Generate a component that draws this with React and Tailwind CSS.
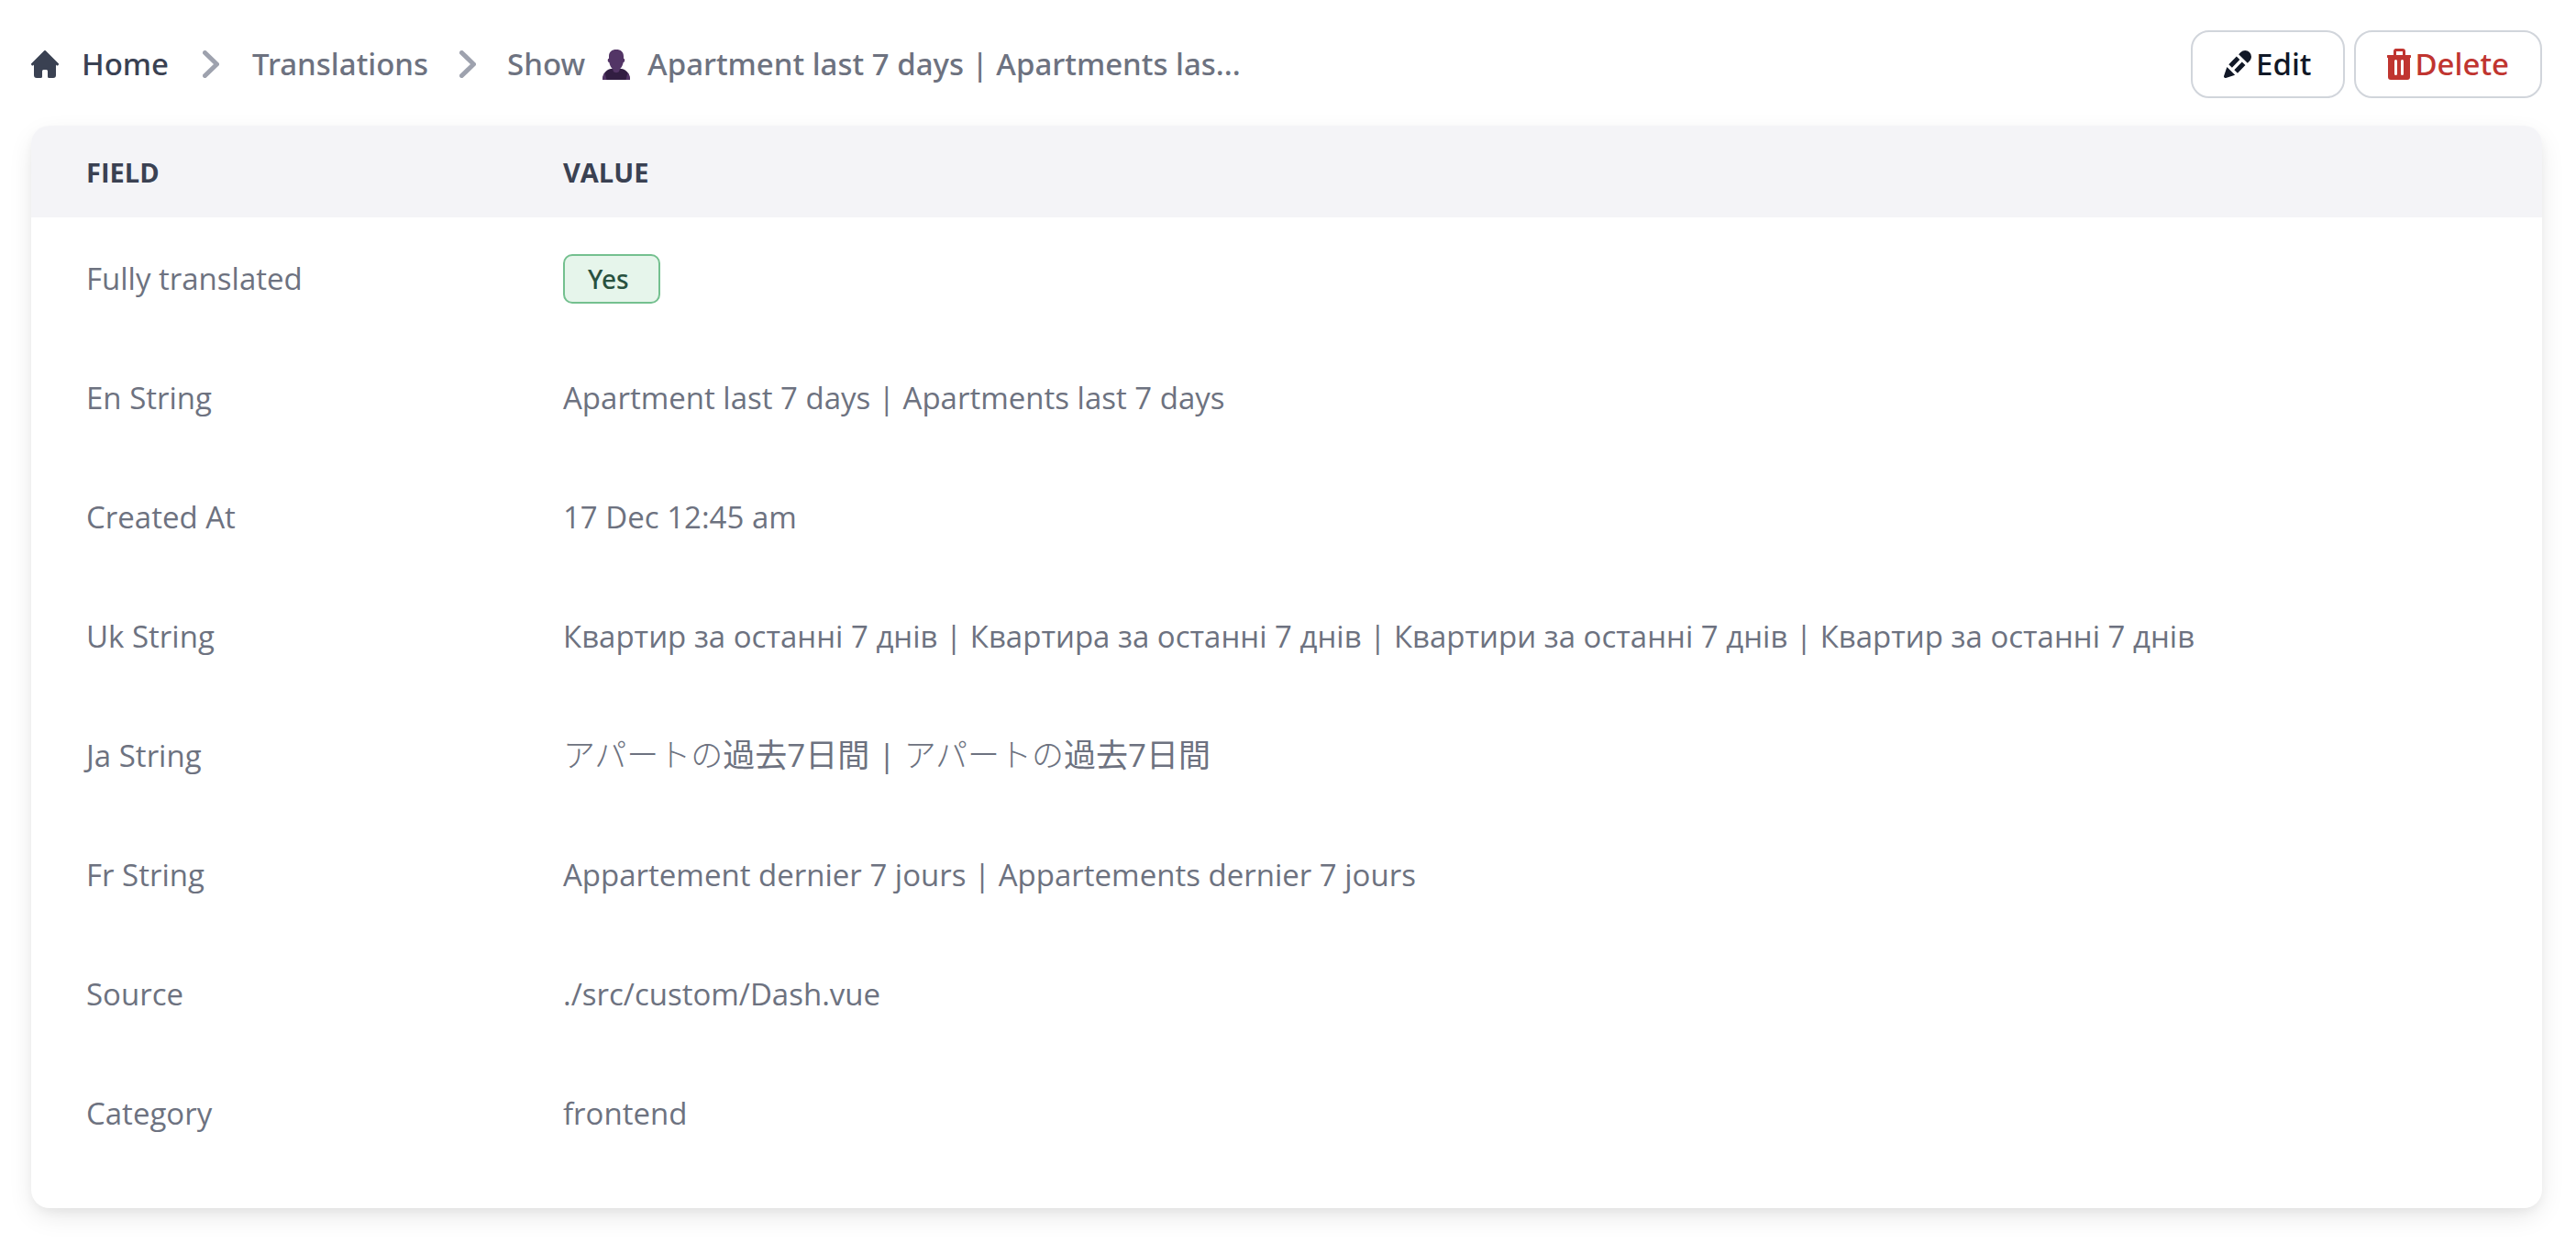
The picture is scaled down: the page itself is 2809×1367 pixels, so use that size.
const rows = [
  ["Fully translated", null],
  ["En String", "Apartment last 7 days | Apartments last 7 days"],
  ["Created At", "17 Dec 12:45 am"],
  ["Uk String", "Квартир за останні 7 днів | Квартира за останні 7 днів | Квартири за останні 7 днів | Квартир за останні 7 днів"],
  ["Ja String", "ja"],
  ["Fr String", "Appartement dernier 7 jours | Appartements dernier 7 jours"],
  ["Source", "./src/custom/Dash.vue"],
  ["Category", "frontend"],
];

function Chevron() {
  return (
    <svg className="h-[30px] w-[18px] text-[#9ea2ae]" viewBox="0 0 18 30" fill="none" aria-hidden="true">
      <path d="M2.5 2.5 15.5 15 2.5 27.5" stroke="currentColor" strokeWidth="5" strokeLinecap="round" strokeLinejoin="round" />
    </svg>
  );
}

function HomeIcon() {
  return (
    <svg className="size-[30px]" viewBox="0 0 20 20" fill="currentColor" aria-hidden="true">
      <path d="m19.707 9.293-2-2-7-7a1 1 0 0 0-1.414 0l-7 7-2 2a1 1 0 0 0 1.414 1.414L2 10.414V18a2 2 0 0 0 2 2h3a1 1 0 0 0 1-1v-4a1 1 0 0 1 1-1h2a1 1 0 0 1 1 1v4a1 1 0 0 0 1 1h3a2 2 0 0 0 2-2v-7.586l.293.293a1 1 0 0 0 1.414-1.414Z" />
    </svg>
  );
}

function PersonIcon() {
  return (
    <svg className="h-[34px] w-[32px]" viewBox="0 0 32 34" aria-hidden="true">
      <path d="M1 34c0-6 3.500-11 9-12h12c5.500 1 9 6 9 12Z" fill="#321e42" />
      <path d="M1 34c0-3 .8-5.800 2.500-8l2 8ZM31 34c0-3-.8-5.800-2.500-8l-2 8Z" fill="#533566" />
      <path d="M16 1c5 0 8 2.500 8 7.500v2.200c1.600 0 1.800 3.800-.3 4.300-.6 3-1.700 5.200-3.700 7.200L19 25c-1 1.500-5 1.500-6 0l-1-2.800c-2-2-3.100-4.200-3.700-7.200-2.100-.5-1.900-4.300-.3-4.300V8.500C8 3.500 11 1 16 1Z" fill="#533566" />
    </svg>
  );
}

function PenIcon() {
  return (
    <svg className="size-[30px]" viewBox="3 3 18 18" fill="currentColor" aria-hidden="true">
      <path d="M14 4.182A4.136 4.136 0 0 1 16.900 3c1.087 0 2.130.425 2.899 1.182A4.010 4.010 0 0 1 21 7.037c0 1.068-.43 2.092-1.194 2.849L18.500 11.214l-5.800-5.710 1.287-1.310.012-.012Zm-2.717 2.763L6.186 12.130l2.175 2.141 5.063-5.218-2.141-2.108Zm-6.250 6.886-1.980 5.849a.992.992 0 0 0 .245 1.026 1.030 1.030 0 0 0 1.043.242L10.282 19l-5.250-5.168Zm6.954 4.010 5.096-5.186-2.218-2.183-5.063 5.218 2.185 2.150Z" />
    </svg>
  );
}

function TrashIcon() {
  return (
    <svg className="h-[34px] w-[26px]" viewBox="0 0 26 34" fill="currentColor" aria-hidden="true">
      <path fillRule="evenodd" d="M9 0h8a3 3 0 0 1 3 3v4h5a1.500 1.500 0 0 1 0 3v21a3 3 0 0 1-3 3H4a3 3 0 0 1-3-3V10a1.500 1.500 0 0 1 0-3h6V3a3 3 0 0 1 2-3Zm1 3v4h7V3ZM8 13.500v14a1.500 1.500 0 0 0 3 0v-14a1.500 1.500 0 0 0-3 0Zm7 0v14a1.500 1.500 0 0 0 3 0v-14a1.500 1.500 0 0 0-3 0Z" />
    </svg>
  );
}

function JaPhrase() {
  return (
    <>
      <span className="font-light">アパートの</span>過去7日間
    </>
  );
}

function Value({ text }) {
  if (text === null) {
    return (
      <span className="inline-flex h-[54px] w-[106px] items-center rounded-[10px] border-2 border-[#74c08f] bg-[#e6f5eb] px-[25px] align-middle font-['Noto_Sans',sans-serif] text-[28px] font-medium text-[#28513f]">
        Yes
      </span>
    );
  }
  if (text === "ja") {
    return (
      <span lang="ja" className="text-[35px]">
        <JaPhrase /> | <JaPhrase />
      </span>
    );
  }
  return text;
}

export default function App() {
  return (
    <main className="min-h-screen bg-white pt-[33px] pr-[37px] pl-[34px] font-['Open_Sans','Noto_Sans_CJK_JP',sans-serif] text-[33px] leading-[50px] text-[#6d7280]">
      <header className="mb-[30px] flex items-center justify-between font-['Noto_Sans',sans-serif] font-medium">
        <nav aria-label="Breadcrumb">
          <ol className="flex items-center">
            <li>
              <a href="#home" className="flex items-center gap-[25px] text-[#3a4152]">
                <HomeIcon />
                Home
              </a>
            </li>
            <li className="ml-[37px] flex items-center gap-[36px]">
              <Chevron />
              <a href="#translations">Translations</a>
            </li>
            <li className="ml-[34px] flex items-center gap-[34px]">
              <Chevron />
              <span className="flex items-center">
                Show
                <span className="mx-[18px]"><PersonIcon /></span>
                Apartment last 7 days | Apartments las...
              </span>
            </li>
          </ol>
        </nav>
        <div className="flex gap-[10px]">
          <button type="button" className="flex h-[74px] items-center gap-[5px] rounded-[20px] border-2 border-[#d1d5db] px-[34px] text-[#111827]">
            <PenIcon />
            Edit
          </button>
          <button type="button" className="flex h-[74px] items-center gap-[5px] rounded-[20px] border-2 border-[#d1d5db] px-[34px] text-[#c03530]">
            <TrashIcon />
            Delete
          </button>
        </div>
      </header>

      <section className="overflow-hidden rounded-[20px] bg-white pb-[40px] shadow-[0_10px_30px_-4px_rgba(0,0,0,0.11),0_5px_12px_-2px_rgba(0,0,0,0.05)]">
        <table className="w-full table-fixed text-left">
          <thead className="bg-[#f4f4f7] text-[29px] uppercase text-[#3a4152]">
            <tr className="h-[100px]">
              <th scope="col" className="w-[520px] px-[60px] pt-[2px] font-bold">Field</th>
              <th scope="col" className="px-[60px] pt-[2px] font-bold">Value</th>
            </tr>
          </thead>
          <tbody>
            {rows.map(([field, text]) => (
              <tr key={field} className="h-[130px]">
                <th scope="row" className="px-[60px] pt-[3px] font-normal">{field}</th>
                <td className="px-[60px] pt-[3px]"><Value text={text} /></td>
              </tr>
            ))}
          </tbody>
        </table>
      </section>
    </main>
  );
}
